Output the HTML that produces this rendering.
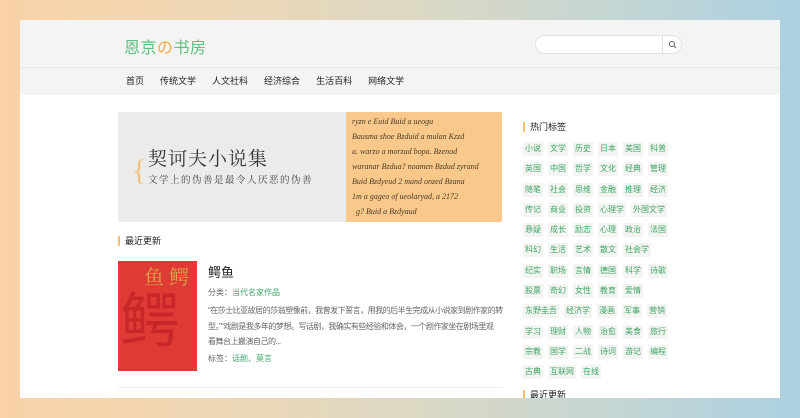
<!DOCTYPE html>
<html><head><meta charset="utf-8"><style>
*{margin:0;padding:0;box-sizing:border-box}
body{width:800px;height:418px;overflow:hidden;font-family:"Liberation Sans","Noto Sans CJK SC",sans-serif;background:linear-gradient(90deg,#f9d2a6 0%,#ecd7b6 30%,#d9d8c6 55%,#c6d6d2 75%,#acd0e2 100%);position:relative}
.page{position:absolute;left:20px;top:20px;width:760px;height:378px;background:#fff;overflow:hidden}
.hdr{height:48px;background:#f4f4f2;border-bottom:1px solid #e8e8e6;position:relative}
.logo{position:absolute;left:104px;top:14px;font-size:16px;color:#5fbf80;letter-spacing:0.5px}
.logo b{color:#f5a94a;font-weight:normal}
.search{position:absolute;left:515px;top:15px;width:147px;height:19px;border:1px solid #e2e2de;border-radius:10px;background:#fff}
.search i{position:absolute;right:0;top:0;width:19px;height:17px;border-left:1px solid #e2e2de}
.nav{height:27px;background:#f4f4f2;font-size:9px;color:#222;padding-left:106px;line-height:26px}
.nav span{margin-right:16px}
.banner{position:absolute;left:98px;top:92px;width:384px;height:110px;background:#ecebea;border-radius:2px;overflow:hidden}
.paper{position:absolute;left:228px;top:0;width:156px;height:110px;background:#f8c98a;font-family:"Liberation Serif",serif;font-style:italic;font-size:8px;color:#4a3a28;line-height:15px;padding:2px 6px;white-space:nowrap;overflow:hidden}
.bt{position:absolute;left:30px;top:32px;font-family:"Noto Serif CJK SC",serif;font-size:19px;color:#333;letter-spacing:1px}
.bs{position:absolute;left:30px;top:60px;font-family:"Noto Serif CJK SC",serif;font-size:9.5px;color:#444;letter-spacing:1.5px}
.brace{position:absolute;left:14px;top:42px;font-size:30px;color:#f0c080;font-family:"Liberation Serif",serif}
.dots{position:absolute;left:300px;top:102px}
.dots i{display:inline-block;width:15px;height:2px;background:#fff;margin-right:6px}
.sec{position:absolute;font-size:9px;color:#222;border-left:2px solid #f5c070;padding-left:5px;line-height:10px}
.cover{position:absolute;left:98px;top:241px;width:79px;height:110px;background:#e03a35;overflow:hidden}
.cover .big{position:absolute;left:2px;top:6px;font-size:60px;color:#c8272a;font-family:"Noto Sans CJK SC",sans-serif;line-height:100px}
.cover .g{position:absolute;left:26px;top:0;font-size:20px;color:#d7a646;font-family:"Noto Serif CJK SC",serif}
.t{position:absolute;left:188px;top:242px;font-size:13px;color:#222}
.m{position:absolute;left:188px;font-size:8px;color:#666}
.m a{color:#3ea565;text-decoration:none}
.d{position:absolute;left:188px;top:283px;width:300px;font-size:8px;letter-spacing:-0.5px;color:#666;line-height:15.5px;white-space:nowrap}
.hr{position:absolute;left:98px;top:367px;width:384px;height:1px;background:#eee}
.tags{position:absolute;left:503px;top:122px;width:200px;font-size:8px;line-height:14px;white-space:nowrap}
.tags span{display:inline-block;background:#f4f5f3;color:#3ea565;padding:0 2px;margin:0 5px 6.3px 0;height:14px}
</style></head><body>
<div class="page">
<div class="hdr"><div class="logo">恩京<b>の</b>书房</div><div class="search"><i><svg width="19" height="17" viewBox="0 0 19 17"><circle cx="9" cy="8" r="2.5" fill="none" stroke="#666" stroke-width="1"/><path d="M11 10l2 2" stroke="#666"/></svg></i></div></div>
<div class="nav"><span>首页</span><span>传统文学</span><span>人文社科</span><span>经济综合</span><span>生活百科</span><span>网络文学</span></div>
<div class="banner"><div class="brace">{</div><div class="bt">契诃夫小说集</div><div class="bs">文学上的伪善是最令人厌恶的伪善</div>
<div class="paper">ryzn  e Euid  Buid a ueogu<br>Bausma shoe Bzduid a mulan Kzzd<br>a. warzo a morzad bopa. Bzenod<br>waranar Bzdua? noamen Bzdud zyrand<br>Buid Bzdyeud 2 mand onzed Bzana<br>1m a gageo of ueolaryad, a 2172<br>&nbsp;&nbsp;g? Buid a Bzdyaud<br>&nbsp;&nbsp;&nbsp;&nbsp;&nbsp;&nbsp;&nbsp;&nbsp;Bargue zyrazd a zyduid</div>
<div class="dots"><i></i><i></i><i></i><i style="background:#4cb870"></i></div></div>
<div class="sec" style="left:98px;top:216px">最近更新</div>
<div class="cover"><div class="big">鳄</div><div class="g">鱼 鳄</div></div>
<div class="t">鳄鱼</div>
<div class="m" style="top:267px">分类：<a>当代名家作品</a></div>
<div class="d">“在莎士比亚故居的莎翁塑像前，我曾发下誓言，用我的后半生完成从小说家到剧作家的转<br>型。”“戏剧是我多年的梦想。写话剧，我确实有些经验和体会，一个剧作家坐在剧场里观<br>看舞台上搬演自己的...</div>
<div class="m" style="top:333px">标签：<a>话剧、莫言</a></div>
<div class="hr"></div>
<div class="sec" style="left:503px;top:102px">热门标签</div>
<div class="tags"><span>小说</span><span>文学</span><span>历史</span><span>日本</span><span>美国</span><span>科普</span><br><span>英国</span><span>中国</span><span>哲学</span><span>文化</span><span>经典</span><span>管理</span><br><span>随笔</span><span>社会</span><span>思维</span><span>金融</span><span>推理</span><span>经济</span><br><span>传记</span><span>商业</span><span>投资</span><span>心理学</span><span>外国文学</span><br><span>悬疑</span><span>成长</span><span>励志</span><span>心理</span><span>政治</span><span>法国</span><br><span>科幻</span><span>生活</span><span>艺术</span><span>散文</span><span>社会学</span><br><span>纪实</span><span>职场</span><span>言情</span><span>德国</span><span>科学</span><span>诗歌</span><br><span>股票</span><span>奇幻</span><span>女性</span><span>教育</span><span>爱情</span><br><span>东野圭吾</span><span>经济学</span><span>漫画</span><span>军事</span><span>营销</span><br><span>学习</span><span>理财</span><span>人物</span><span>治愈</span><span>美食</span><span>旅行</span><br><span>宗教</span><span>国学</span><span>二战</span><span>诗词</span><span>游记</span><span>编程</span><br><span>古典</span><span>互联网</span><span>在线</span></div>
<div class="sec" style="left:503px;top:370px">最近更新</div>
</div>
</body></html>
